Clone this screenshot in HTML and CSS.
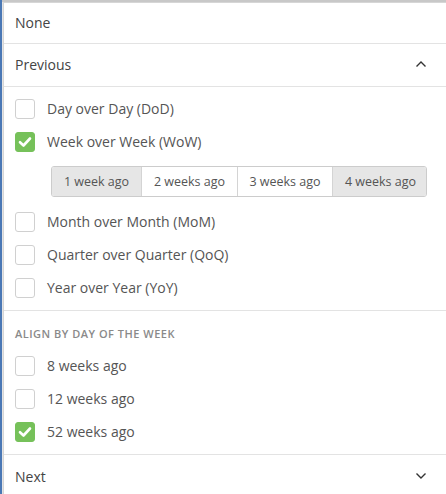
FILE: index.html
```html
<!DOCTYPE html>
<html>
<head>
<meta charset="utf-8">
<link rel="stylesheet" href="styles.css">
</head>
<body>
<div class="backdrop"></div>
<div class="panel">
  <div class="header"><span>None</span></div>
  <div class="header"><span>Previous</span>
    <svg class="chev" width="12" height="8" viewBox="0 0 12 8"><path d="M1.5 6.5 L6 2 L10.5 6.5" fill="none" stroke="#333" stroke-width="1.4"/></svg>
  </div>
  <div class="section first">
    <div class="row"><span class="box"></span><span>Day over Day (DoD)</span></div>
    <div class="row"><span class="box on"><svg width="14" height="12" viewBox="0 0 14 12"><path d="M2 6.2 L5.5 9.5 L12 2.5" fill="none" stroke="#fff" stroke-width="2.6" stroke-linecap="round" stroke-linejoin="round"/></svg></span><span>Week over Week (WoW)</span></div>
    <div class="seg">
      <div class="opt sel">1 week ago</div>
      <div class="opt">2 weeks ago</div>
      <div class="opt">3 weeks ago</div>
      <div class="opt sel">4 weeks ago</div>
    </div>
    <div class="row"><span class="box"></span><span>Month over Month (MoM)</span></div>
    <div class="row"><span class="box"></span><span>Quarter over Quarter (QoQ)</span></div>
    <div class="row"><span class="box"></span><span>Year over Year (YoY)</span></div>
  </div>
  <div class="section second">
    <div class="label">ALIGN BY DAY OF THE WEEK</div>
    <div class="row"><span class="box"></span><span>8 weeks ago</span></div>
    <div class="row"><span class="box"></span><span>12 weeks ago</span></div>
    <div class="row"><span class="box on"><svg width="14" height="12" viewBox="0 0 14 12"><path d="M2 6.2 L5.5 9.5 L12 2.5" fill="none" stroke="#fff" stroke-width="2.6" stroke-linecap="round" stroke-linejoin="round"/></svg></span><span>52 weeks ago</span></div>
  </div>
  <div class="header last"><span>Next</span>
    <svg class="chev" width="12" height="8" viewBox="0 0 12 8"><path d="M1.5 1.5 L6 6 L10.5 1.5" fill="none" stroke="#333" stroke-width="1.4"/></svg>
  </div>
</div>
</body>
</html>
```
FILE: styles.css
```css
html, body {
  margin: 0;
  padding: 0;
  height: 100%;
  overflow: hidden;
}
body {
  background: #e4e4e4;
  font-family: "Open Sans", "Liberation Sans", sans-serif;
  color: #555;
  border-left: 2px solid #4a78b5;
  box-sizing: border-box;
}
.backdrop {
  height: 2px;
  background: #c8c8c8;
}
.panel {
  margin-left: 1px;
  background: #fff;
  border-left: 1px solid #d6d6d6;
  border-top: 1px solid #d6d6d6;
}
.header {
  height: 38px;
  display: flex;
  align-items: center;
  justify-content: space-between;
  padding: 0 15px 2px 11px;
  font-size: 14px;
  color: #444;
  border-bottom: 1px solid #e3e3e3;
}
.header + .header {
  height: 40px;
}
.header.last {
  height: 42px;
  padding-bottom: 0;
  border-bottom: none;
}
.chev {
  margin-right: 4px;
}
.section {
  border-bottom: 1px solid #e3e3e3;
}
.section.first {
  padding: 5px 0 6px;
}
.section.second {
  padding: 0 0 6px;
}
.row {
  height: 33px;
  display: flex;
  align-items: center;
  padding-left: 11px;
  font-size: 14px;
  color: #555;
}
.box {
  width: 20px;
  height: 20px;
  box-sizing: border-box;
  border: 1.5px solid #d0d0d0;
  border-radius: 3px;
  margin-right: 12px;
  display: flex;
  align-items: center;
  justify-content: center;
  flex-shrink: 0;
}
.box.on {
  background: #76c15a;
  border-color: #76c15a;
}
.seg {
  display: grid;
  grid-template-columns: 89px 96px 95px 96px;
  margin: 8px 0 8px 47px;
  width: 376px;
  height: 31px;
  border: 1px solid #cccccc;
  border-radius: 3px;
  box-sizing: border-box;
  overflow: hidden;
}
.opt {
  display: flex;
  align-items: center;
  justify-content: center;
  font-size: 12.5px;
  color: #555;
  background: #fff;
  border-left: 1px solid #d4d4d4;
}
.opt:first-child {
  border-left: none;
}
.opt.sel {
  background: #e6e6e6;
}
.label {
  padding: 16px 0 8px 11px;
  font-size: 11px;
  line-height: 14px;
  font-weight: 600;
  letter-spacing: 0.5px;
  color: #8a8a8a;
}
```
